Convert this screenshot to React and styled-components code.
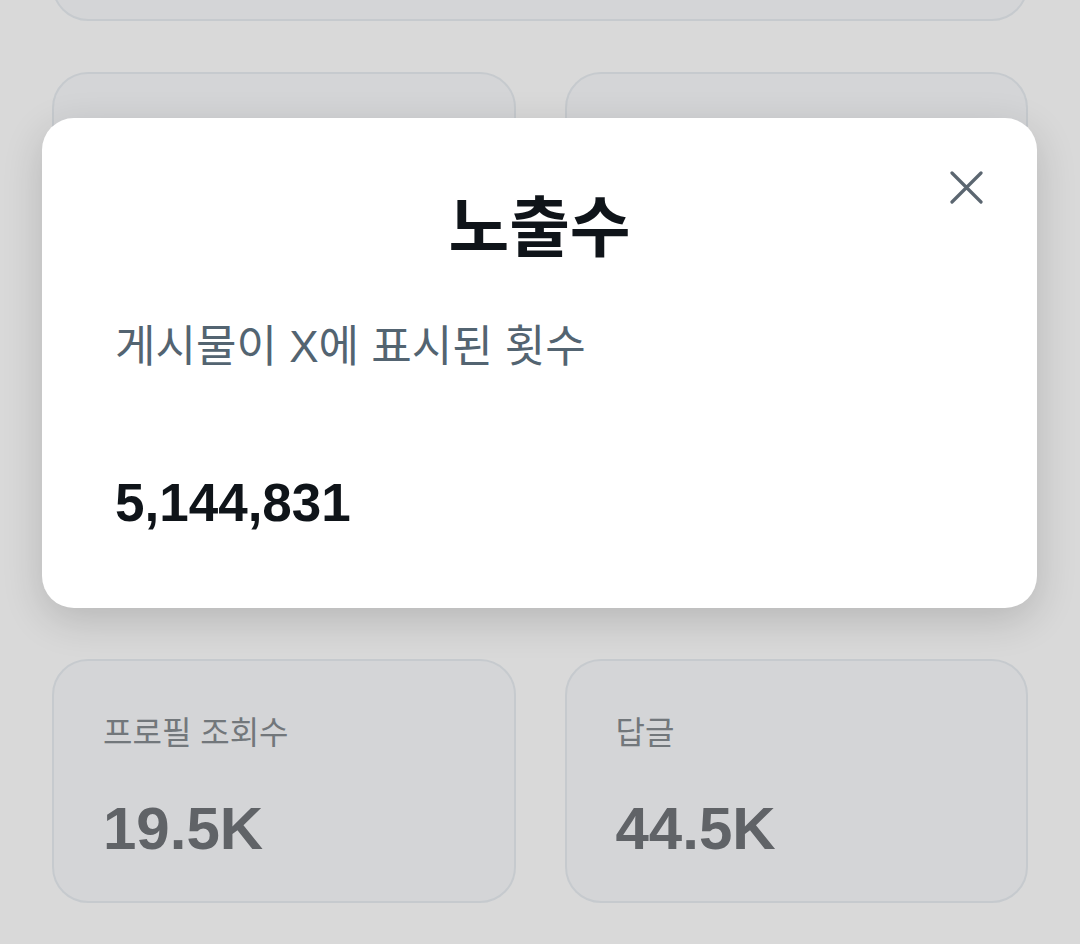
import React from 'react';
import styled, { createGlobalStyle } from 'styled-components';

const GlobalStyle = createGlobalStyle`
  html, body {
    margin: 0;
    padding: 0;
    background: #d9d9d9;
    overflow: hidden;
  }
  body {
    font-family: "Liberation Sans", "Noto Sans CJK KR", sans-serif;
  }
`;

const stats = [
    { label: '프로필 조회수', value: '19.5K' },
    { label: '답글', value: '44.5K' },
];

const CloseIcon = () => (
    <svg width="34" height="34" viewBox="0 0 34 34" fill="none">
        <path d="M3 3L32 32M32 3L3 32" stroke="#5b6670" strokeWidth="3.2" strokeLinecap="round" />
    </svg>
);

const App = () => {
    return (
        <Page>
            <GlobalStyle />
            <TopCard />
            <Grid>
                <Card tall />
                <Card tall />
                {stats.map(stat => (
                    <Card key={stat.label}>
                        <CardLabel>{stat.label}</CardLabel>
                        <CardValue>{stat.value}</CardValue>
                    </Card>
                ))}
            </Grid>
            <Modal>
                <CloseButton aria-label="닫기">
                    <CloseIcon />
                </CloseButton>
                <ModalTitle>노출수</ModalTitle>
                <ModalText>게시물이 X에 표시된 횟수</ModalText>
                <ModalNumber>5,144,831</ModalNumber>
            </Modal>
        </Page>
    );
};

export default App;

const Page = styled.div`
    position: relative;
    width: 1080px;
    height: 944px;
    box-sizing: border-box;
    padding: 0 52px;
    overflow: hidden;
`;

const TopCard = styled.div`
    height: 200px;
    margin-top: -179px;
    box-sizing: border-box;
    border: 2px solid #c6cace;
    border-radius: 36px;
    background: #d4d5d7;
`;

const Grid = styled.div`
    display: grid;
    grid-template-columns: 1fr 1fr;
    column-gap: 49px;
    row-gap: 51px;
    margin-top: 51px;
`;

const Card = styled.div`
    height: ${props => (props.tall ? '536px' : '244px')};
    box-sizing: border-box;
    border: 2px solid #c6cace;
    border-radius: 36px;
    background: #d4d5d7;
    padding: 54px 49px 0;
    display: flex;
    flex-direction: column;
`;

const CardLabel = styled.div`
    font-size: 32px;
    line-height: 36px;
    color: #72777b;
`;

const CardValue = styled.div`
    margin-top: 42px;
    font-size: 60px;
    line-height: 72px;
    font-weight: 700;
    color: #606367;
`;

const Modal = styled.div`
    position: absolute;
    top: 118px;
    left: 42px;
    width: 995px;
    height: 490px;
    box-sizing: border-box;
    padding: 73px 73px 0;
    background: #fff;
    border-radius: 32px;
    box-shadow: 0 12px 40px rgba(0, 0, 0, 0.16);
`;

const CloseButton = styled.button`
    position: absolute;
    top: 52px;
    right: 54px;
    width: 34px;
    height: 34px;
    padding: 0;
    border: none;
    background: none;
    display: flex;
    cursor: pointer;
`;

const ModalTitle = styled.h2`
    margin: 0;
    text-align: center;
    font-size: 66px;
    line-height: 74px;
    font-weight: 700;
    color: #0f1419;
`;

const ModalText = styled.p`
    margin: 58px 0 0;
    font-size: 44px;
    line-height: 48px;
    color: #536471;
`;

const ModalNumber = styled.div`
    margin-top: 100px;
    font-size: 53px;
    line-height: 64px;
    font-weight: 700;
    color: #0f1419;
`;
